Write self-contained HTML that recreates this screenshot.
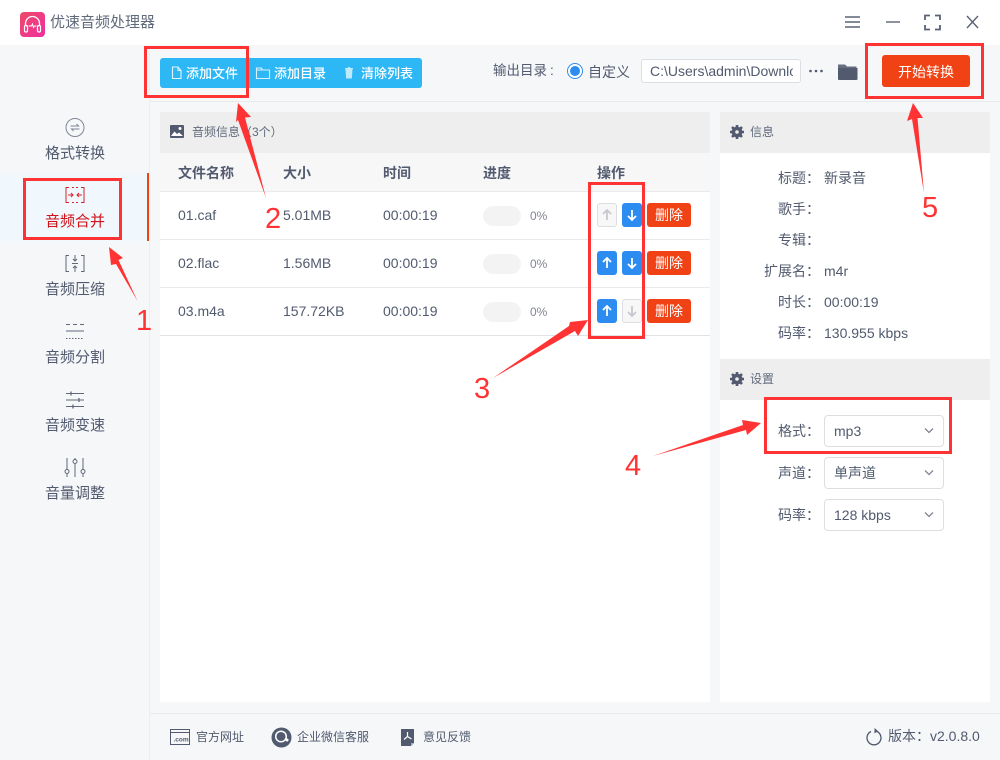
<!DOCTYPE html>
<html lang="zh">
<head>
<meta charset="utf-8">
<title>优速音频处理器</title>
<style>
html,body{margin:0;padding:0;width:1000px;height:760px;overflow:hidden;background:#f5f7f9}
body{position:relative;font-family:"Liberation Sans","Noto Sans CJK SC",sans-serif;color:#515a6e;font-size:14px}
svg{display:block}
.a{position:absolute}
.t{position:absolute;height:20px;line-height:20px;white-space:nowrap}
.b{position:absolute;box-sizing:border-box}
.up{position:absolute;width:20px;height:24px;border-radius:3px;box-sizing:border-box;background:#2d8cf0}
.dis{background:#f7f7f7;border:1px solid #dcdee2}
.del{position:absolute;left:647px;width:44px;height:24px;border-radius:3px;background:#f04214;color:#fff;font-size:14px;line-height:25px;text-align:center}
.pill{position:absolute;left:483px;width:38px;height:20px;border-radius:10px;background:#f3f3f3}
.sel{position:absolute;left:824px;width:120px;height:32px;box-sizing:border-box;border:1px solid #dcdee2;border-radius:4px;background:#fff;line-height:30px;padding-left:9px;font-size:14px}
.sel svg{position:absolute;left:98px;top:11px}
.rb{position:absolute;box-sizing:border-box;border:3px solid #ff3333}
.num{position:absolute;color:#ff3333;font-size:29px;line-height:30px;height:30px;font-family:"Liberation Sans",sans-serif}
.h{font-weight:bold;font-size:14px;top:163px}
.w{font-size:13px;color:#fff;font-weight:500;top:64px}
</style>
</head>
<body>
<!-- title bar -->
<div class="a" style="left:0;top:0;width:1000px;height:45px;background:#fff"></div>
<svg class="a" style="left:20px;top:12px" width="25" height="25" viewBox="0 0 25 25">
<defs><linearGradient id="g" x1="0" y1="0" x2="1" y2="1"><stop offset="0" stop-color="#ee4a66"/><stop offset="1" stop-color="#ee2f9f"/></linearGradient></defs>
<rect width="25" height="25" rx="4" fill="url(#g)"/>
<path d="M5.500 14V11.500a7 7 0 0 1 14 0V14" fill="none" stroke="#fff" stroke-width="1.300"/>
<rect x="4.500" y="13.500" width="3" height="6.500" rx="1.400" fill="none" stroke="#fff" stroke-width="1.200"/>
<rect x="17.500" y="13.500" width="3" height="6.500" rx="1.400" fill="none" stroke="#fff" stroke-width="1.200"/>
<path d="M8.500 14h3l1-2 1 3.500 1-1.500h2" fill="none" stroke="#fff" stroke-width="1"/>
</svg>
<div class="t" style="left:50px;top:13px;font-size:15px;color:#616a7c">优速音频处理器</div>
<svg class="a" style="left:840px;top:10px" width="145" height="24" viewBox="0 0 145 24" fill="none" stroke="#5a6375" stroke-width="1.400">
<path d="M5 7h15M5 12h15M5 17h15"/>
<path d="M46 12h14"/>
<path d="M85 10V5.500h5M95 5.500h5V10M100 15v4.500h-5M90 19.500h-5V15" stroke-width="1.800"/>
<path d="M127 6l11 12M138 6l-11 12"/>
</svg>

<!-- sidebar -->
<div class="a" style="left:149px;top:45px;width:1px;height:715px;background:#eceef1"></div>
<div class="a" style="left:0;top:173px;width:147px;height:68px;background:#f0f8fd"></div>
<div class="a" style="left:147px;top:173px;width:2px;height:68px;background:#f04214"></div>

<svg class="a" style="left:60px;top:112px" width="30" height="30" viewBox="0 0 30 30" fill="none" stroke="#808695" stroke-width="1">
<circle cx="15" cy="15.500" r="9"/><path d="M10.500 14h8l-2-2M19.500 17h-8l2 2"/>
</svg>
<div class="t" style="left:45px;top:144px;font-size:15px">格式转换</div>

<svg class="a" style="left:60px;top:180px" width="30" height="30" viewBox="0 0 30 30" fill="none" stroke="#d8252b" stroke-width="1">
<path d="M9 7.500H6v15h3M21 7.500h3v15h-3M12 7.500h2M16 7.500h2M12 22.500h2M16 22.500h2"/>
<path d="M8 15h5M11 13l2 2-2 2M22 15h-5M19 13l-2 2 2 2"/>
</svg>
<div class="t" style="left:45px;top:212px;font-size:15px;color:#d0121b">音频合并</div>

<svg class="a" style="left:60px;top:248px" width="30" height="30" viewBox="0 0 30 30" fill="none" stroke="#5f6779" stroke-width="1">
<path d="M9 7.500H6v16h3M21 7.500h3v16h-3M15 7v6M13 11l2 2 2-2M15 24v-6M13 20l2-2 2 2M12 15.500h6"/>
</svg>
<div class="t" style="left:45px;top:280px;font-size:15px">音频压缩</div>

<svg class="a" style="left:60px;top:316px" width="30" height="30" viewBox="0 0 30 30" fill="none" stroke="#5f6779" stroke-width="1">
<path d="M6 8.500h4M13 8.500h4M20 8.500h4M6 15h18"/>
<path d="M6 22.500h18" stroke-dasharray="1.500 1.500"/>
</svg>
<div class="t" style="left:45px;top:348px;font-size:15px">音频分割</div>

<svg class="a" style="left:60px;top:385px" width="30" height="30" viewBox="0 0 30 30" fill="none" stroke="#5f6779" stroke-width="1">
<path d="M6 8.500h18M6 15h18M6 21.500h18"/>
<path d="M11 6.500v4M19 13v4M13 19.500v4" stroke-width="1.300"/>
</svg>
<div class="t" style="left:45px;top:416px;font-size:15px">音频变速</div>

<svg class="a" style="left:60px;top:453px" width="30" height="30" viewBox="0 0 30 30" fill="none" stroke="#5f6779" stroke-width="1">
<path d="M7 5v11M7 21v3M15 5v1M15 11v13M23 5v11M23 21v3"/>
<circle cx="7" cy="18.500" r="2"/><circle cx="15" cy="8.500" r="2"/><circle cx="23" cy="18.500" r="2"/>
</svg>
<div class="t" style="left:45px;top:484px;font-size:15px">音量调整</div>

<!-- toolbar -->
<div class="a" style="left:150px;top:101px;width:850px;height:1px;background:#e8eaec"></div>
<div class="a" style="left:160px;top:58px;width:262px;height:30px;border-radius:3px;background:#2db7f5"></div>
<svg class="a" style="left:170px;top:65px" width="14" height="16" viewBox="0 0 14 16" fill="none" stroke="#e0f5ff" stroke-width="1.100">
<path d="M2.500 2h5.500l3 3.500V13.500H2.500zM8 2v3.500h3"/>
</svg>
<div class="t w" style="left:186px">添加文件</div>
<svg class="a" style="left:255px;top:65px" width="16" height="16" viewBox="0 0 16 16" fill="none" stroke="#d8f2ff" stroke-width="1.100">
<path d="M1.500 3h5l1 2h7v8.500h-13zM1.500 5h6"/>
</svg>
<div class="t w" style="left:274px">添加目录</div>
<svg class="a" style="left:342px;top:65px" width="15" height="16" viewBox="0 0 15 16">
<path d="M3.500 4h7l-.6 9.500h-5.800zM3 3h8v1H3zM6 2h2v1H6z" fill="#bfe9fc"/>
</svg>
<div class="t w" style="left:361px">清除列表</div>

<div class="t" style="left:493px;top:61px;font-size:13.500px">输出目录<span style="margin-left:3px">:</span></div>
<div class="b" style="left:567px;top:63px;width:16px;height:16px;border-radius:50%;border:1px solid #2d8cf0;background:#fff"></div>
<div class="a" style="left:570px;top:66px;width:10px;height:10px;border-radius:50%;background:#2d8cf0"></div>
<div class="t" style="left:588px;top:62px;font-size:14px">自定义</div>
<div class="b" style="left:641px;top:59px;width:160px;height:24px;border:1px solid #dcdee2;border-radius:3px;background:#fff"></div>
<div class="t" style="left:650px;top:61px;width:143px;overflow:hidden;font-size:14px">C:\Users\admin\Downloads</div>
<svg class="a" style="left:808px;top:68px" width="16" height="6" viewBox="0 0 16 6" fill="#515a6e"><circle cx="2.500" cy="3" r="1.300"/><circle cx="8" cy="3" r="1.300"/><circle cx="13.500" cy="3" r="1.300"/></svg>
<svg class="a" style="left:837px;top:62px" width="21" height="19" viewBox="0 0 21 19">
<path d="M1 2.500h7l2 2h9.500v2H1z" fill="#666e80"/><path d="M1 6h19.500v11a1 1 0 0 1-1 1H2a1 1 0 0 1-1-1z" fill="#515a6e"/>
</svg>
<div class="a" style="left:882px;top:55px;width:88px;height:32px;border-radius:3px;background:#f04214;color:#fff;font-size:14px;line-height:34px;text-align:center">开始转换</div>

<!-- main panel -->
<div class="a" style="left:160px;top:112px;width:550px;height:590px;background:#fff"></div>
<div class="a" style="left:160px;top:112px;width:550px;height:41px;background:#eeeeee"></div>
<div class="a" style="left:160px;top:153px;width:550px;height:38px;background:#f7f7f8"></div>
<div class="a" style="left:160px;top:191px;width:550px;height:1px;background:#e8eaec"></div>
<div class="a" style="left:160px;top:239px;width:550px;height:1px;background:#e8eaec"></div>
<div class="a" style="left:160px;top:287px;width:550px;height:1px;background:#e8eaec"></div>
<div class="a" style="left:160px;top:335px;width:550px;height:1px;background:#e0e2e5"></div>
<svg class="a" style="left:170px;top:125px" width="14" height="13" viewBox="0 0 14 13">
<rect width="14" height="13" rx="1" fill="#515a6e"/><circle cx="10" cy="3.500" r="1.500" fill="#fff"/><path d="M1 11l3.500-4.500 2.500 2.500 2-1.500 4 3.500z" fill="#fff"/>
</svg>
<div class="t" style="left:192px;top:122px;font-size:12px;color:#616a7c">音频信息（3个）</div>

<div class="t h" style="left:178px">文件名称</div>
<div class="t h" style="left:283px">大小</div>
<div class="t h" style="left:383px">时间</div>
<div class="t h" style="left:483px">进度</div>
<div class="t h" style="left:597px">操作</div>

<div class="t" style="left:178px;top:205px">01.caf</div>
<div class="t" style="left:283px;top:205px">5.01MB</div>
<div class="t" style="left:383px;top:205px">00:00:19</div>
<div class="pill" style="top:206px"></div>
<div class="t" style="left:530px;top:206px;font-size:12px;color:#808695">0%</div>
<div class="up dis" style="left:597px;top:203px"><svg width="18" height="22" viewBox="0 0 18 22" fill="none" stroke="#c5c8ce" stroke-width="1.800"><path d="M9 16V6.500M5 10l4-4 4 4"/></svg></div>
<div class="up" style="left:622px;top:203px"><svg width="20" height="24" viewBox="0 0 20 24" fill="none" stroke="#fff" stroke-width="1.800"><path d="M10 7v10M6 13l4 4 4-4"/></svg></div>
<div class="del" style="top:203px">删除</div>

<div class="t" style="left:178px;top:253px">02.flac</div>
<div class="t" style="left:283px;top:253px">1.56MB</div>
<div class="t" style="left:383px;top:253px">00:00:19</div>
<div class="pill" style="top:254px"></div>
<div class="t" style="left:530px;top:254px;font-size:12px;color:#808695">0%</div>
<div class="up" style="left:597px;top:251px"><svg width="20" height="24" viewBox="0 0 20 24" fill="none" stroke="#fff" stroke-width="1.800"><path d="M10 17V7M6 11l4-4 4 4"/></svg></div>
<div class="up" style="left:622px;top:251px"><svg width="20" height="24" viewBox="0 0 20 24" fill="none" stroke="#fff" stroke-width="1.800"><path d="M10 7v10M6 13l4 4 4-4"/></svg></div>
<div class="del" style="top:251px">删除</div>

<div class="t" style="left:178px;top:301px">03.m4a</div>
<div class="t" style="left:283px;top:301px">157.72KB</div>
<div class="t" style="left:383px;top:301px">00:00:19</div>
<div class="pill" style="top:302px"></div>
<div class="t" style="left:530px;top:302px;font-size:12px;color:#808695">0%</div>
<div class="up" style="left:597px;top:299px"><svg width="20" height="24" viewBox="0 0 20 24" fill="none" stroke="#fff" stroke-width="1.800"><path d="M10 17V7M6 11l4-4 4 4"/></svg></div>
<div class="up dis" style="left:622px;top:299px"><svg width="18" height="22" viewBox="0 0 18 22" fill="none" stroke="#c5c8ce" stroke-width="1.800"><path d="M9 6v9.500M5 12l4 4 4-4"/></svg></div>
<div class="del" style="top:299px">删除</div>

<!-- right panel -->
<div class="a" style="left:720px;top:112px;width:270px;height:590px;background:#fff"></div>
<div class="a" style="left:720px;top:112px;width:270px;height:41px;background:#eeeeee"></div>
<div class="a" style="left:720px;top:359px;width:270px;height:41px;background:#eeeeee"></div>
<svg class="a" style="left:730px;top:125px" width="14" height="14" viewBox="0 0 14 14">
<circle cx="7" cy="7" r="3.600" fill="none" stroke="#515a6e" stroke-width="3.600"/><g stroke="#515a6e" stroke-width="2.600"><path d="M7 0v2.500M7 11.500V14M0 7h2.500M11.500 7H14M2 2l1.800 1.800M10.200 10.200L12 12M12 2l-1.800 1.800M3.800 10.200L2 12"/></g>
</svg>
<div class="t" style="left:750px;top:122px;font-size:12px;color:#616a7c">信息</div>
<svg class="a" style="left:730px;top:372px" width="14" height="14" viewBox="0 0 14 14">
<circle cx="7" cy="7" r="3.600" fill="none" stroke="#515a6e" stroke-width="3.600"/><g stroke="#515a6e" stroke-width="2.600"><path d="M7 0v2.500M7 11.500V14M0 7h2.500M11.500 7H14M2 2l1.800 1.800M10.200 10.200L12 12M12 2l-1.800 1.800M3.800 10.200L2 12"/></g>
</svg>
<div class="t" style="left:750px;top:369px;font-size:12px;color:#616a7c">设置</div>

<div class="t" style="left:778px;top:168px">标题：</div><div class="t" style="left:824px;top:168px">新录音</div>
<div class="t" style="left:778px;top:199px">歌手：</div>
<div class="t" style="left:778px;top:230px">专辑：</div>
<div class="t" style="left:764px;top:261px">扩展名：</div><div class="t" style="left:824px;top:261px">m4r</div>
<div class="t" style="left:778px;top:292px">时长：</div><div class="t" style="left:824px;top:292px">00:00:19</div>
<div class="t" style="left:778px;top:323px">码率：</div><div class="t" style="left:824px;top:323px">130.955 kbps</div>

<div class="t" style="left:778px;top:421px">格式：</div>
<div class="sel" style="top:415px">mp3<svg width="12" height="8" viewBox="0 0 12 8" fill="none" stroke="#808695" stroke-width="1.300"><path d="M2 1.500l4 4 4-4"/></svg></div>
<div class="t" style="left:778px;top:463px">声道：</div>
<div class="sel" style="top:457px;line-height:31px">单声道<svg width="12" height="8" viewBox="0 0 12 8" fill="none" stroke="#808695" stroke-width="1.300"><path d="M2 1.500l4 4 4-4"/></svg></div>
<div class="t" style="left:778px;top:505px">码率：</div>
<div class="sel" style="top:499px">128 kbps<svg width="12" height="8" viewBox="0 0 12 8" fill="none" stroke="#808695" stroke-width="1.300"><path d="M2 1.500l4 4 4-4"/></svg></div>

<!-- footer -->
<div class="a" style="left:150px;top:713px;width:850px;height:1px;background:#e8eaec"></div>
<svg class="a" style="left:170px;top:729px" width="20" height="17" viewBox="0 0 20 17" fill="none" stroke="#515a6e" stroke-width="1">
<rect x=".5" y=".5" width="19" height="15"/><path d="M.5 3.500h19"/>
<text x="3.500" y="12.500" font-size="6.500" font-weight="bold" fill="#515a6e" stroke="none" font-family="Liberation Sans">.com</text>
</svg>
<div class="t" style="left:196px;top:727px;font-size:12px">官方网址</div>
<svg class="a" style="left:271px;top:727px" width="21" height="21" viewBox="0 0 21 21">
<circle cx="10.500" cy="10.500" r="10" fill="#515a6e"/><circle cx="10" cy="9.500" r="5.300" fill="none" stroke="#fff" stroke-width="1.500"/><circle cx="16" cy="13" r="1.500" fill="#fff"/>
</svg>
<div class="t" style="left:297px;top:727px;font-size:12px">企业微信客服</div>
<svg class="a" style="left:400px;top:727px" width="16" height="20" viewBox="0 0 16 20">
<path d="M1 2h13v14l-3 3H1z" fill="#515a6e"/><path d="M11 19v-3h3z" fill="#a8adb8"/><path d="M7.500 5v4.500L4 12.500M7.500 9.500l4 2.500" fill="none" stroke="#fff" stroke-width="1.200"/>
</svg>
<div class="t" style="left:423px;top:727px;font-size:12px">意见反馈</div>
<svg class="a" style="left:865px;top:727px" width="18" height="19" viewBox="0 0 18 19" fill="none" stroke="#515a6e" stroke-width="1.300">
<path d="M6 4.500a7 7 0 1 0 6 0"/><path d="M9.500 1l3.500 3-3.500 2.500z" fill="#515a6e" stroke="none"/>
</svg>
<div class="t" style="left:888px;top:726px;font-size:14px">版本：v2.0.8.0</div>

<!-- annotations -->
<div class="rb" style="left:23px;top:178px;width:99px;height:62px"></div>
<div class="rb" style="left:144px;top:46px;width:105px;height:52px"></div>
<div class="rb" style="left:588px;top:182px;width:57px;height:157px"></div>
<div class="rb" style="left:764px;top:397px;width:188px;height:57px"></div>
<div class="rb" style="left:865px;top:43px;width:119px;height:56px"></div>
<svg class="a" style="left:0;top:0" width="1000" height="760" viewBox="0 0 1000 760" fill="#ff3333">
<path d="M109 247L123 258 118.500 260 137.500 301 116 264 111 265z"/>
<path d="M238 103L251 117 245 117.500 266 198 238 120 236 122z"/>
<path d="M588 320L578 336 575 331 493 378 569 326 570 322z"/>
<path d="M761 423L747 435 746 430 653 456 743 425 742 420z"/>
<path d="M913 103L923 118 917.500 118 924 193 912 119 907 121z"/>
</svg>
<div class="num" style="left:136px;top:306px">1</div>
<div class="num" style="left:265px;top:204px">2</div>
<div class="num" style="left:474px;top:374px">3</div>
<div class="num" style="left:625px;top:451px">4</div>
<div class="num" style="left:922px;top:193px">5</div>
</body>
</html>
